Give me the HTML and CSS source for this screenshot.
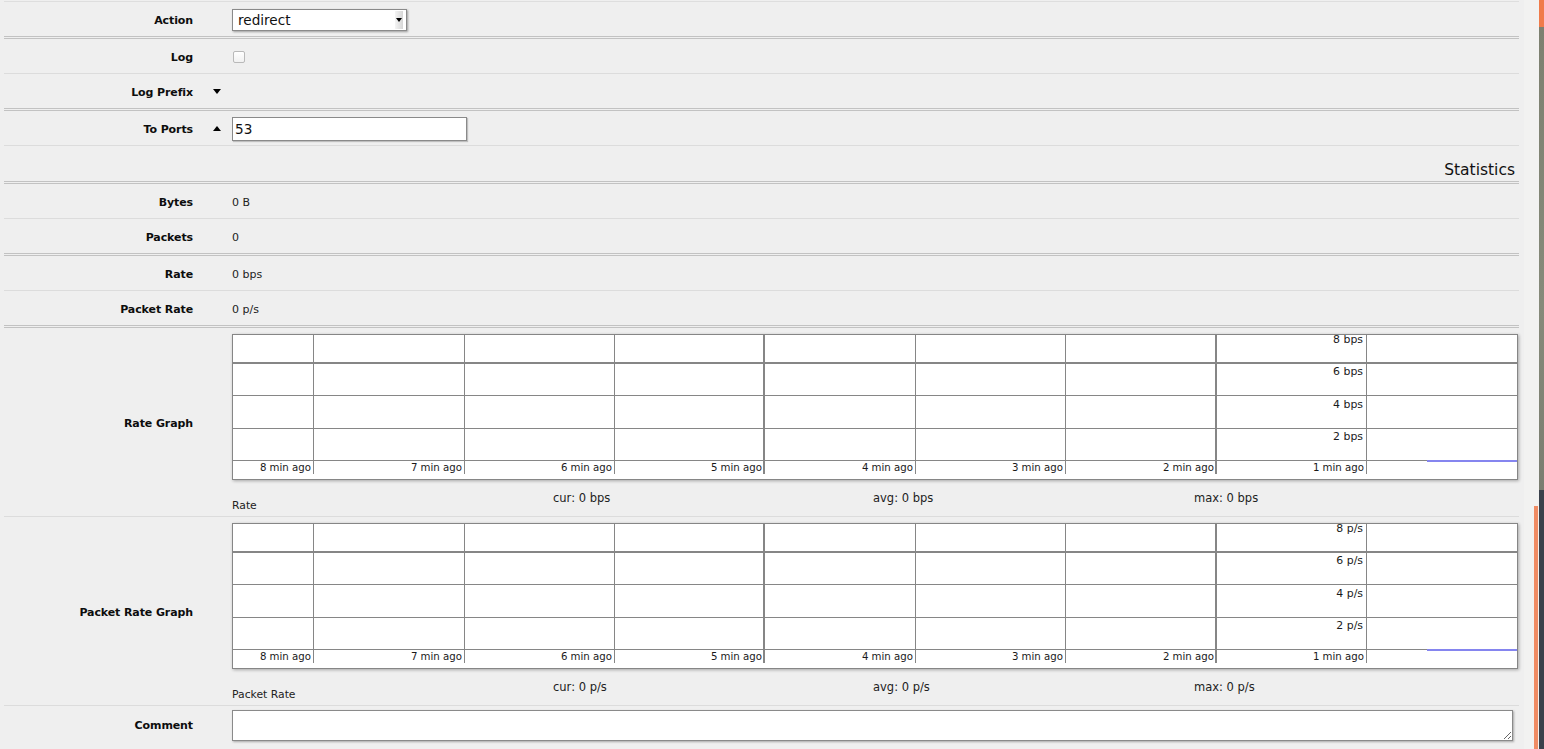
FILE: index.html
```html
<!DOCTYPE html>
<html>
<head>
<meta charset="utf-8">
<title>Firewall Rule</title>
<link rel="stylesheet" href="styles.css">
</head>
<body>
<div class="screen">
  <div class="main">
    <div class="form">
      <div class="row group-end">
        <div class="label">Action</div><div class="toggle"></div>
        <div class="value">
          <div class="select"><span class="sel-text">redirect</span><span class="sel-btn"><span class="sel-arrow"></span></span></div>
        </div>
      </div>
      <div class="row">
        <div class="label">Log</div><div class="toggle"></div>
        <div class="value"><span class="checkbox"></span></div>
      </div>
      <div class="row group-end">
        <div class="label">Log Prefix</div><div class="toggle"><span class="tri-down"></span></div>
        <div class="value"></div>
      </div>
      <div class="row">
        <div class="label">To Ports</div><div class="toggle"><span class="tri-up"></span></div>
        <div class="value"><input class="text-input" type="text" value="53"></div>
      </div>
      <div class="row heading group-end">
        <div class="heading-text">Statistics</div>
      </div>
      <div class="row">
        <div class="label">Bytes</div><div class="toggle"></div>
        <div class="value text">0 B</div>
      </div>
      <div class="row group-end">
        <div class="label">Packets</div><div class="toggle"></div>
        <div class="value text">0</div>
      </div>
      <div class="row">
        <div class="label">Rate</div><div class="toggle"></div>
        <div class="value text">0 bps</div>
      </div>
      <div class="row group-end">
        <div class="label">Packet Rate</div><div class="toggle"></div>
        <div class="value text">0 p/s</div>
      </div>
      <div class="row graph-row">
        <div class="label">Rate Graph</div><div class="toggle"></div>
        <div class="value graph-cell">
          <div class="graph">
            <svg width="1286" height="146" viewBox="0 0 1286 146" xmlns="http://www.w3.org/2000/svg">
              <rect x="0.5" y="0.5" width="1285" height="145" fill="#ffffff" stroke="#868686"/>
              <g stroke="#868686" stroke-width="1">
                <line x1="0" y1="29" x2="1286" y2="29" stroke-width="2"/>
                <line x1="0" y1="61.5" x2="1286" y2="61.5"/>
                <line x1="0" y1="94.5" x2="1286" y2="94.5"/>
                <line x1="0" y1="126.5" x2="1286" y2="126.5"/>
                <line x1="81.5" y1="0" x2="81.5" y2="140"/>
                <line x1="232.5" y1="0" x2="232.5" y2="140"/>
                <line x1="382.5" y1="0" x2="382.5" y2="140"/>
                <line x1="532" y1="0" x2="532" y2="140" stroke-width="2"/>
                <line x1="683.5" y1="0" x2="683.5" y2="140"/>
                <line x1="833.5" y1="0" x2="833.5" y2="140"/>
                <line x1="984" y1="0" x2="984" y2="140" stroke-width="2"/>
                <line x1="1134.5" y1="0" x2="1134.5" y2="140"/>
              </g>
              <rect x="1195" y="126" width="90" height="2" fill="#8585ef"/>
              <g class="xl" text-anchor="end">
                <text x="79" y="137">8 min ago</text>
                <text x="230" y="137">7 min ago</text>
                <text x="380" y="137">6 min ago</text>
                <text x="530" y="137">5 min ago</text>
                <text x="681" y="137">4 min ago</text>
                <text x="831" y="137">3 min ago</text>
                <text x="982" y="137">2 min ago</text>
                <text x="1132" y="137">1 min ago</text>
              </g>
              <g class="yl" text-anchor="end">
                <text x="1131" y="9">8 bps</text>
                <text x="1131" y="41">6 bps</text>
                <text x="1131" y="74">4 bps</text>
                <text x="1131" y="106">2 bps</text>
              </g>
            </svg>
          </div>
          <div class="legend">
            <div class="legend-name">Rate</div>
            <div class="legend-stat c2">cur: 0 bps</div>
            <div class="legend-stat c3">avg: 0 bps</div>
            <div class="legend-stat c4">max: 0 bps</div>
          </div>
        </div>
      </div>
      <div class="row graph-row">
        <div class="label">Packet Rate Graph</div><div class="toggle"></div>
        <div class="value graph-cell">
          <div class="graph">
            <svg width="1286" height="146" viewBox="0 0 1286 146" xmlns="http://www.w3.org/2000/svg">
              <rect x="0.5" y="0.5" width="1285" height="145" fill="#ffffff" stroke="#868686"/>
              <g stroke="#868686" stroke-width="1">
                <line x1="0" y1="29" x2="1286" y2="29" stroke-width="2"/>
                <line x1="0" y1="61.5" x2="1286" y2="61.5"/>
                <line x1="0" y1="94.5" x2="1286" y2="94.5"/>
                <line x1="0" y1="126.5" x2="1286" y2="126.5"/>
                <line x1="81.5" y1="0" x2="81.5" y2="140"/>
                <line x1="232.5" y1="0" x2="232.5" y2="140"/>
                <line x1="382.5" y1="0" x2="382.5" y2="140"/>
                <line x1="532" y1="0" x2="532" y2="140" stroke-width="2"/>
                <line x1="683.5" y1="0" x2="683.5" y2="140"/>
                <line x1="833.5" y1="0" x2="833.5" y2="140"/>
                <line x1="984" y1="0" x2="984" y2="140" stroke-width="2"/>
                <line x1="1134.5" y1="0" x2="1134.5" y2="140"/>
              </g>
              <rect x="1195" y="126" width="90" height="2" fill="#8585ef"/>
              <g class="xl" text-anchor="end">
                <text x="79" y="137">8 min ago</text>
                <text x="230" y="137">7 min ago</text>
                <text x="380" y="137">6 min ago</text>
                <text x="530" y="137">5 min ago</text>
                <text x="681" y="137">4 min ago</text>
                <text x="831" y="137">3 min ago</text>
                <text x="982" y="137">2 min ago</text>
                <text x="1132" y="137">1 min ago</text>
              </g>
              <g class="yl" text-anchor="end">
                <text x="1131" y="9">8 p/s</text>
                <text x="1131" y="41">6 p/s</text>
                <text x="1131" y="74">4 p/s</text>
                <text x="1131" y="106">2 p/s</text>
              </g>
            </svg>
          </div>
          <div class="legend">
            <div class="legend-name">Packet Rate</div>
            <div class="legend-stat c2">cur: 0 p/s</div>
            <div class="legend-stat c3">avg: 0 p/s</div>
            <div class="legend-stat c4">max: 0 p/s</div>
          </div>
        </div>
      </div>
      <div class="row comment-row">
        <div class="label">Comment</div><div class="toggle"></div>
        <div class="value"><textarea class="comment"></textarea></div>
      </div>
    </div>
    <div class="spacer"></div>
    <div class="gutter"><div class="scroll-mark"></div></div>
  </div>
  <div class="edge">
    <div class="edge-top"></div>
    <div class="edge-mid"></div>
    <div class="edge-bottom"></div>
  </div>
</div>
</body>
</html>
```

FILE: styles.css
```css
html, body {
  margin: 0;
  padding: 0;
}
body {
  background: #efefef;
  font-family: "DejaVu Sans", Verdana, sans-serif;
  color: #111;
  overflow: hidden;
}
.screen {
  display: flex;
  height: 749px;
  width: 1544px;
}
.main {
  display: flex;
  width: 1539px;
  background: #efefef;
}
.form {
  width: 1515px;
  margin-left: 4px;
  margin-top: 1px;
  border-top: 1px solid #dedede;
  align-self: flex-start;
}
.spacer {
  width: 5px;
}
.gutter {
  flex: 1;
  background: #f2f2f1;
  position: relative;
}
.scroll-mark {
  position: absolute;
  right: 1px;
  top: 506px;
  width: 4px;
  height: 243px;
  background: #f08c64;
}
.edge {
  width: 5px;
  display: flex;
  flex-direction: column;
}
.edge-top {
  height: 27px;
  background: #f07b4a;
}
.edge-mid {
  height: 463px;
  background: linear-gradient(#7d8070, #868a7a 60%, #7a7d70);
}
.edge-bottom {
  flex: 1;
  background: #3a414b;
}

.row {
  display: grid;
  grid-template-columns: 189px 39px 1fr;
  align-items: center;
  height: 34px;
  border-bottom: 1px solid #dcdcdc;
}
.row.group-end {
  border-bottom: 3px double #c2c2c2;
}
.label {
  text-align: right;
  font-weight: bold;
  font-size: 11px;
  letter-spacing: -0.1px;
  color: #0d0d0d;
  white-space: nowrap;
  padding-top: 2px;
}
.toggle {
  display: flex;
  align-items: center;
  padding-left: 20px;
}
.value {
  display: flex;
  align-items: center;
}
.value.text {
  font-size: 11px;
  color: #222;
  padding-top: 2px;
}

.select {
  width: 173px;
  height: 20px;
  border: 1px solid #8a8a8a;
  background: #fff;
  box-shadow: 1px 1px 2px rgba(0, 0, 0, 0.35);
  display: flex;
  align-items: center;
  justify-content: space-between;
  margin-top: 1px;
}
.sel-text {
  font-size: 13.6px;
  padding-left: 5px;
  color: #111;
}
.sel-btn {
  width: 8px;
  height: 18px;
  margin-right: 3px;
  background: linear-gradient(to right, #f4f4f4, #d6d6d6);
  display: flex;
  align-items: center;
  justify-content: center;
}
.sel-arrow {
  width: 0;
  height: 0;
  border-left: 3px solid transparent;
  border-right: 3px solid transparent;
  border-top: 4px solid #000;
}
.checkbox {
  display: block;
  width: 10px;
  height: 10px;
  margin-left: 1px;
  margin-top: 1px;
  border: 1px solid #b9b9b9;
  border-radius: 2px;
  background: linear-gradient(#ffffff, #f1f1f1);
}
.tri-down {
  width: 0;
  height: 0;
  margin-top: 1px;
  border-left: 4.5px solid transparent;
  border-right: 4.5px solid transparent;
  border-top: 5px solid #000;
}
.tri-up {
  width: 0;
  height: 0;
  margin-top: 1px;
  border-left: 4.5px solid transparent;
  border-right: 4.5px solid transparent;
  border-bottom: 5px solid #000;
}
.text-input {
  box-sizing: border-box;
  width: 235px;
  height: 24px;
  margin: 1px 0 0 0;
  padding: 0 0 0 2px;
  border: 1px solid #8a8a8a;
  background: #fff;
  font-family: "DejaVu Sans", Verdana, sans-serif;
  font-size: 13.6px;
  color: #111;
  box-shadow: 1px 1px 1px rgba(0, 0, 0, 0.2);
  outline: none;
}

.row.heading {
  display: flex;
  justify-content: flex-end;
  align-items: flex-end;
  height: 35px;
}
.heading-text {
  font-size: 15.5px;
  line-height: 18px;
  padding-right: 4px;
  padding-bottom: 2px;
  color: #111;
}

.row.graph-row {
  height: 188px;
}
.graph-cell {
  flex-direction: column;
  align-items: flex-start;
  align-self: stretch;
  padding-top: 6px;
}
.graph {
  width: 1286px;
  height: 146px;
  box-shadow: 1px 1px 3px rgba(0, 0, 0, 0.3);
}
.graph svg {
  display: block;
}
.xl text {
  font-family: "DejaVu Sans", Verdana, sans-serif;
  font-size: 10.2px;
  fill: #1a1a1a;
}
.yl text {
  font-family: "DejaVu Sans", Verdana, sans-serif;
  font-size: 10.9px;
  fill: #1a1a1a;
}
.legend {
  display: flex;
  height: 36px;
  width: 1286px;
  color: #222;
}
.legend-name {
  width: 321px;
  align-self: flex-end;
  font-size: 10.8px;
  line-height: 13px;
  padding-bottom: 4px;
}
.legend-stat {
  font-size: 11.5px;
  line-height: 14px;
  padding-top: 11px;
}
.legend-stat.c2 {
  width: 320px;
}
.legend-stat.c3 {
  width: 321px;
}

.row.comment-row {
  align-items: start;
  height: auto;
  border-bottom: none;
}
.row.comment-row .label {
  padding-top: 13px;
}
.row.comment-row .value {
  padding-top: 4px;
}
.comment {
  box-sizing: border-box;
  width: 1281px;
  height: 31px;
  margin: 0;
  border: 1px solid #8a8a8a;
  background: #fff;
  box-shadow: 1px 1px 2px rgba(0, 0, 0, 0.3);
  font-family: "DejaVu Sans", Verdana, sans-serif;
  font-size: 12px;
  outline: none;
}
```
